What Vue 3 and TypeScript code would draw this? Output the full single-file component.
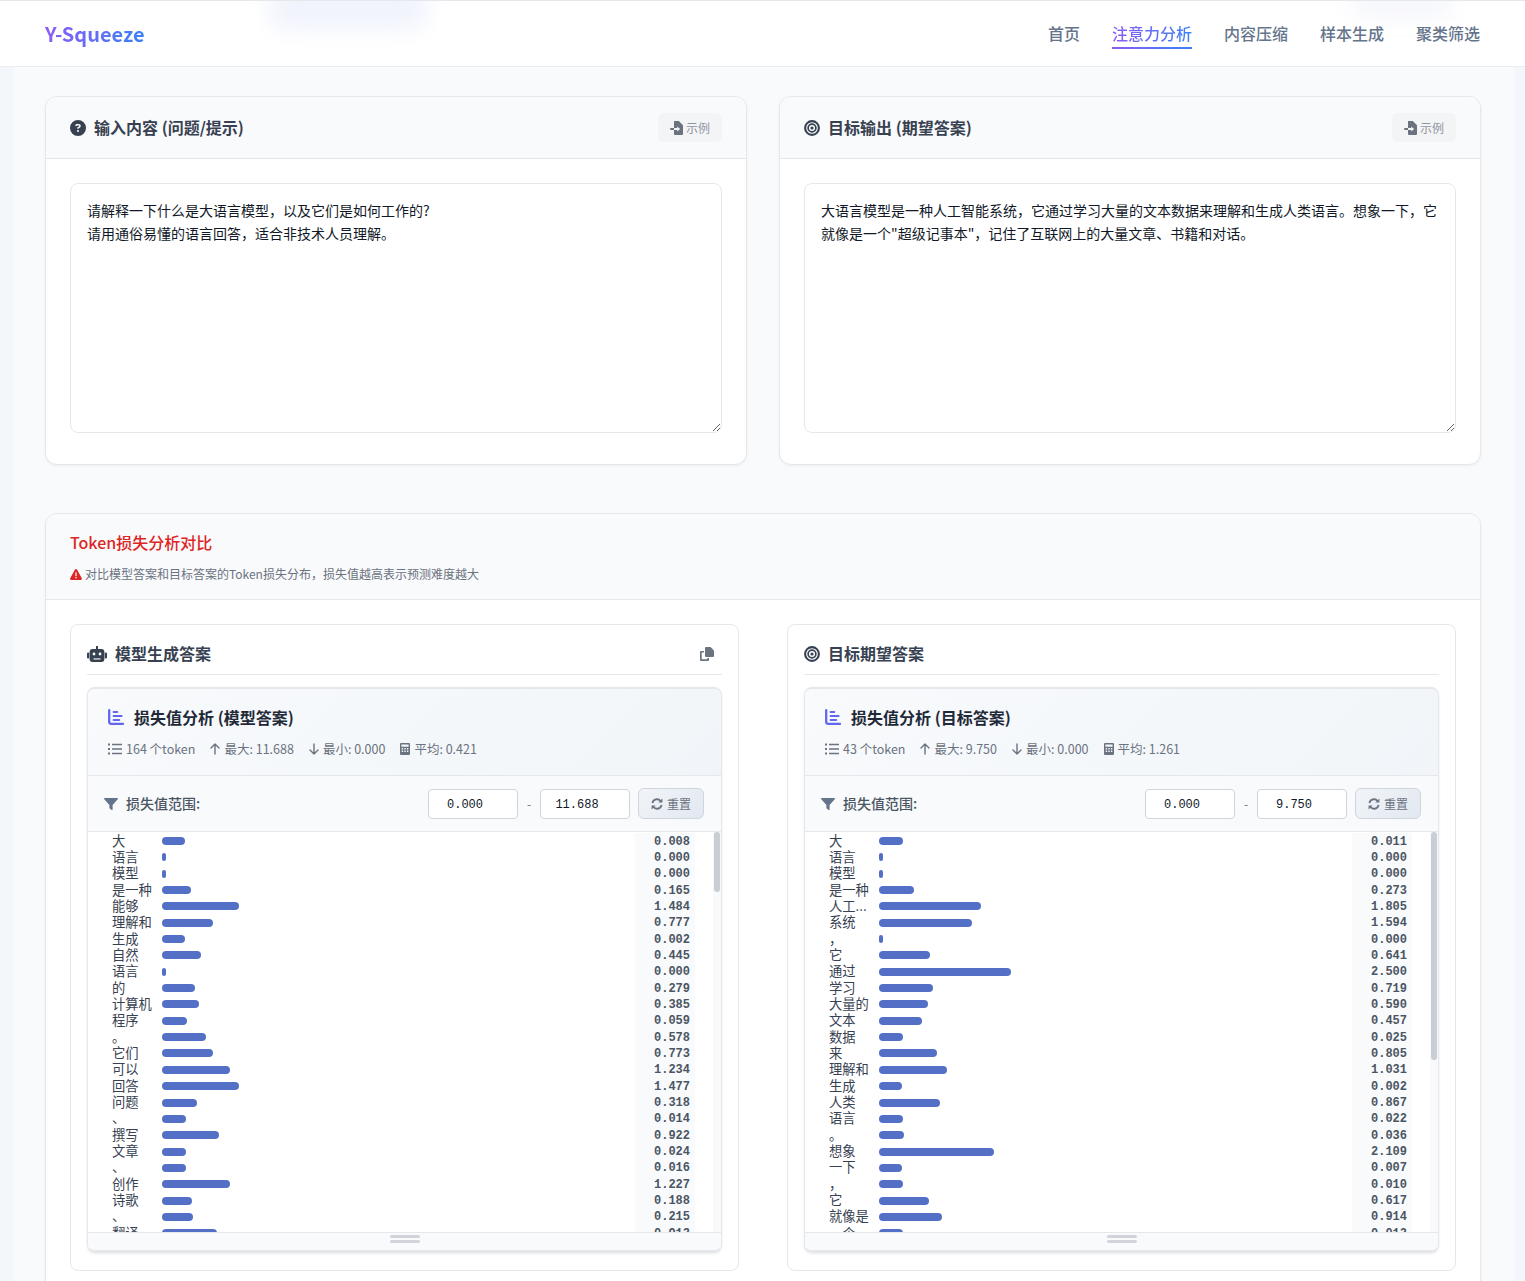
<script setup lang="ts">
interface Row {
  label: string
  bar: number
  value: string
}

interface Panel {
  title: string
  icon: 'robot' | 'target'
  analysis: string
  count: number
  max: string
  min: string
  avg: string
  rows: Row[]
}

const toRows = (items: [string, number, string][]): Row[] =>
  items.map(([label, bar, value]) => ({ label, bar, value }))

const ROW_HEIGHT = 16.35
const LIST_HEIGHT = 400

const thumbHeight = (count: number) => (LIST_HEIGHT / (count * ROW_HEIGHT)) * LIST_HEIGHT

const inputText = '请解释一下什么是大语言模型，以及它们是如何工作的?\n请用通俗易懂的语言回答，适合非技术人员理解。'
const targetText =
  '大语言模型是一种人工智能系统，它通过学习大量的文本数据来理解和生成人类语言。想象一下，它就像是一个"超级记事本"，记住了互联网上的大量文章、书籍和对话。'

const navItems = ['首页', '注意力分析', '内容压缩', '样本生成', '聚类筛选']

const panels: Panel[] = [
  {
    title: '模型生成答案',
    icon: 'robot',
    analysis: '损失值分析 (模型答案)',
    count: 164,
    max: '11.688',
    min: '0.000',
    avg: '0.421',
    rows: toRows([
      ['大', 23, '0.008'], ['语言', 4, '0.000'], ['模型', 4, '0.000'], ['是一种', 29, '0.165'],
      ['能够', 77, '1.484'], ['理解和', 51, '0.777'], ['生成', 23, '0.002'], ['自然', 39, '0.445'],
      ['语言', 4, '0.000'], ['的', 33, '0.279'], ['计算机', 37, '0.385'], ['程序', 25, '0.059'],
      ['。', 44, '0.578'], ['它们', 51, '0.773'], ['可以', 68, '1.234'], ['回答', 77, '1.477'],
      ['问题', 35, '0.318'], ['、', 24, '0.014'], ['撰写', 57, '0.922'], ['文章', 24, '0.024'],
      ['、', 24, '0.016'], ['创作', 68, '1.227'], ['诗歌', 30, '0.188'], ['、', 31, '0.215'],
      ['翻译', 55, '0.913']
    ])
  },
  {
    title: '目标期望答案',
    icon: 'target',
    analysis: '损失值分析 (目标答案)',
    count: 43,
    max: '9.750',
    min: '0.000',
    avg: '1.261',
    rows: toRows([
      ['大', 24, '0.011'], ['语言', 4, '0.000'], ['模型', 4, '0.000'], ['是一种', 35, '0.273'],
      ['人工...', 102, '1.805'], ['系统', 93, '1.594'], ['，', 4, '0.000'], ['它', 51, '0.641'],
      ['通过', 132, '2.500'], ['学习', 54, '0.719'], ['大量的', 49, '0.590'], ['文本', 43, '0.457'],
      ['数据', 24, '0.025'], ['来', 58, '0.805'], ['理解和', 68, '1.031'], ['生成', 23, '0.002'],
      ['人类', 61, '0.867'], ['语言', 24, '0.022'], ['。', 25, '0.036'], ['想象', 115, '2.109'],
      ['一下', 23, '0.007'], ['，', 24, '0.010'], ['它', 50, '0.617'], ['就像是', 63, '0.914'],
      ['一个', 24, '0.012']
    ])
  }
]
</script>

<template>
  <div class="page">
    <header class="topbar">
      <span class="blob blob-a"></span>
      <span class="blob blob-b"></span>
      <div class="logo">Y-Squeeze</div>
      <nav class="nav">
        <a v-for="(item, i) in navItems" :key="item" class="nav-link" :class="{ active: i === 1 }">{{ item }}</a>
      </nav>
    </header>

    <main class="main">
      <section class="io-grid">
        <div class="card">
          <div class="card-head">
            <h2 class="card-title">
              <svg class="ico16" viewBox="0 0 512 512"><path fill="currentColor" d="M256 512A256 256 0 1 0 256 0a256 256 0 1 0 0 512zM169.8 165.3c7.9-22.3 29.1-37.3 52.8-37.3h58.3c34.9 0 63.1 28.3 63.1 63.1c0 22.6-12.1 43.5-31.7 54.8L280 264.4c-.2 13-10.9 23.6-24 23.6c-13.3 0-24-10.7-24-24V250.5c0-8.6 4.6-16.5 12.1-20.8l44.3-25.4c4.7-2.7 7.6-7.7 7.6-13.1c0-8.4-6.8-15.1-15.1-15.1H222.6c-3.4 0-6.4 2.1-7.5 5.3l-.4 1.2c-4.4 12.5-18.2 19-30.6 14.6s-19-18.2-14.6-30.6l.4-1.2zM224 352a32 32 0 1 1 64 0 32 32 0 1 1 -64 0z" /></svg>
              输入内容 (问题/提示)
            </h2>
            <button class="example-btn">
              <svg class="ico-file" viewBox="0 0 14 14"><path fill="currentColor" d="M4 0h4.8L13 4.2V13a1 1 0 0 1-1 1H5a1 1 0 0 1-1-1V9h3.2v1.5L10.2 8 7.2 5.5V7H4V0z" /><path fill="currentColor" d="M1 7h3v2H1a1 1 0 0 1 0-2z" /></svg>
              示例
            </button>
          </div>
          <div class="card-body">
            <textarea class="editor" :value="inputText" spellcheck="false"></textarea>
          </div>
        </div>

        <div class="card">
          <div class="card-head">
            <h2 class="card-title">
              <svg class="ico16" viewBox="0 0 16 16"><circle cx="8" cy="8" r="6.9" fill="none" stroke="currentColor" stroke-width="2.1" /><circle cx="8" cy="8" r="3.9" fill="none" stroke="currentColor" stroke-width="1.7" /><circle cx="8" cy="8" r="1.6" fill="currentColor" /></svg>
              目标输出 (期望答案)
            </h2>
            <button class="example-btn">
              <svg class="ico-file" viewBox="0 0 14 14"><path fill="currentColor" d="M4 0h4.8L13 4.2V13a1 1 0 0 1-1 1H5a1 1 0 0 1-1-1V9h3.2v1.5L10.2 8 7.2 5.5V7H4V0z" /><path fill="currentColor" d="M1 7h3v2H1a1 1 0 0 1 0-2z" /></svg>
              示例
            </button>
          </div>
          <div class="card-body">
            <textarea class="editor" :value="targetText" spellcheck="false"></textarea>
          </div>
        </div>
      </section>

      <section class="card compare">
        <div class="compare-head">
          <h2 class="compare-title">Token损失分析对比</h2>
          <p class="compare-sub">
            <svg class="ico-warn" viewBox="0 0 12 11"><path fill="#dc2626" d="M6 0c.4 0 .8.2 1 .6l4.8 8.6c.4.8-.1 1.8-1 1.8H1.2c-.9 0-1.4-1-1-1.8L5 .6C5.2.2 5.6 0 6 0z" /><rect x="5.4" y="3.2" width="1.2" height="4" rx=".5" fill="#fff" /><circle cx="6" cy="8.8" r=".8" fill="#fff" /></svg>
            对比模型答案和目标答案的Token损失分布，损失值越高表示预测难度越大
          </p>
        </div>

        <div class="compare-grid">
          <div v-for="panel in panels" :key="panel.title" class="panel">
            <div class="panel-head">
              <h3 class="panel-title">
                <svg v-if="panel.icon === 'robot'" class="ico-robot" viewBox="0 0 20 16">
                  <rect x="2.6" y="3" width="14.8" height="13" rx="3" fill="currentColor" />
                  <rect x="9" y="0" width="2" height="4" fill="currentColor" />
                  <rect x="0" y="6.5" width="2.2" height="6" rx="1" fill="currentColor" />
                  <rect x="17.8" y="6.5" width="2.2" height="6" rx="1" fill="currentColor" />
                  <circle cx="7" cy="8" r="1.4" fill="#fff" />
                  <circle cx="13" cy="8" r="1.4" fill="#fff" />
                  <rect x="6.5" y="12.4" width="7" height="1.1" fill="#fff" />
                </svg>
                <svg v-else class="ico16" viewBox="0 0 16 16"><circle cx="8" cy="8" r="6.9" fill="none" stroke="currentColor" stroke-width="2.1" /><circle cx="8" cy="8" r="3.9" fill="none" stroke="currentColor" stroke-width="1.7" /><circle cx="8" cy="8" r="1.6" fill="currentColor" /></svg>
                {{ panel.title }}
              </h3>
              <svg v-if="panel.icon === 'robot'" class="ico-copy" viewBox="0 0 14 14">
                <path fill="currentColor" d="M6 0h4.5L14 3.5V9a1 1 0 0 1-1 1H6a1 1 0 0 1-1-1V1a1 1 0 0 1 1-1z" />
                <path fill="currentColor" d="M1 4h3v1.6H1.7v6.7h5.6V11H9v2a1 1 0 0 1-1 1H1a1 1 0 0 1-1-1V5a1 1 0 0 1 1-1z" />
              </svg>
            </div>

            <div class="loss-box">
              <div class="loss-head">
                <h4 class="loss-title">
                  <svg class="ico-chart" viewBox="0 0 16 16">
                    <path fill="none" stroke="#6366f1" stroke-width="2.3" stroke-linecap="round" d="M1.2 1.2v11.6a2 2 0 0 0 2 2H15" />
                    <path fill="none" stroke="#6366f1" stroke-width="2" stroke-linecap="round" d="M5.6 3h3.6M5.6 7h8M5.6 11h5.6" />
                  </svg>
                  {{ panel.analysis }}
                </h4>
                <div class="loss-stats">
                  <span class="stat">
                    <svg class="ico-stat" viewBox="0 0 14 12"><path fill="currentColor" d="M0 .5h2v2H0zM0 5h2v2H0zM0 9.5h2v2H0zM4 .8h10v1.4H4zM4 5.3h10v1.4H4zM4 9.8h10v1.4H4z" /></svg>
                    {{ panel.count }} 个token
                  </span>
                  <span class="stat">
                    <svg class="ico-arrow" viewBox="0 0 10 12"><path fill="none" stroke="currentColor" stroke-width="1.4" stroke-linecap="round" stroke-linejoin="round" d="M5 11V1M1 5l4-4 4 4" /></svg>
                    最大: {{ panel.max }}
                  </span>
                  <span class="stat">
                    <svg class="ico-arrow" viewBox="0 0 10 12"><path fill="none" stroke="currentColor" stroke-width="1.4" stroke-linecap="round" stroke-linejoin="round" d="M5 1v10M1 7l4 4 4-4" /></svg>
                    最小: {{ panel.min }}
                  </span>
                  <span class="stat">
                    <svg class="ico-calc" viewBox="0 0 10 12"><path fill="currentColor" fill-rule="evenodd" d="M1 0h8a1 1 0 0 1 1 1v10a1 1 0 0 1-1 1H1a1 1 0 0 1-1-1V1a1 1 0 0 1 1-1zm.4 1.4v2.4h7.2V1.4zm.3 3.6v1.4h1.4V5zm2.6 0v1.4h1.4V5zm2.6 0v1.4h1.4V5zM1.7 7.6V9h1.4V7.6zm2.6 0V9h1.4V7.6zm2.6 0V9h1.4V7.6z" /></svg>
                    平均: {{ panel.avg }}
                  </span>
                </div>
              </div>

              <div class="filter">
                <span class="filter-label">
                  <svg class="ico-funnel" viewBox="0 0 14 12"><path fill="currentColor" d="M.6 0h12.8c.5 0 .8.6.5 1L8.6 7v4.4c0 .5-.5.8-.9.5l-2-1.4a.6.6 0 0 1-.3-.5V7L.1 1C-.2.6.1 0 .6 0z" /></svg>
                  损失值范围:
                </span>
                <div class="filter-controls">
                  <input class="range-input" type="text" :value="panel.min" />
                  <span class="dash">-</span>
                  <input class="range-input" type="text" :value="panel.max" />
                  <button class="reset-btn">
                    <svg class="ico-sync" viewBox="0 0 12 12">
                      <path fill="none" stroke="currentColor" stroke-width="1.8" d="M1.4 5A4.7 4.7 0 0 1 9.6 3M10.6 7A4.7 4.7 0 0 1 2.4 9" />
                      <path fill="currentColor" d="M11.4.6v4H7.4zM.6 11.4v-4h4z" />
                    </svg>
                    重置
                  </button>
                </div>
              </div>

              <div class="token-list">
                <div class="token-rows">
                  <div v-for="(row, i) in panel.rows" :key="i" class="token-row">
                    <span class="token-label">{{ row.label }}</span>
                    <span class="token-track"><i class="token-bar" :style="{ width: row.bar + 'px' }"></i></span>
                    <span class="token-value">{{ row.value }}</span>
                  </div>
                </div>
                <div class="scroll-track">
                  <div class="scroll-thumb" :style="{ height: thumbHeight(panel.count) + 'px' }"></div>
                </div>
              </div>

              <div class="resize-bar">
                <span class="grip"></span>
                <span class="grip"></span>
              </div>
            </div>
          </div>
        </div>
      </section>
    </main>
  </div>
</template>

<style scoped>
.page {
  position: relative;
  height: 1281px;
  overflow: hidden;
  color: #374151;
  font-family: "Noto Sans CJK SC", "Noto Sans", sans-serif;
  background: linear-gradient(90deg, #f3f6fb 0, #f3f6fb 13px, #f8fafc 14px, #f8fafc 1514px, #f3f6fb 1515px);
}

.topbar {
  position: relative;
  height: 67px;
  box-sizing: border-box;
  display: flex;
  align-items: center;
  justify-content: space-between;
  padding: 0 45px;
  background: #fff;
  border-top: 1px solid #e5e7eb;
  border-bottom: 1px solid #e9edf3;
  overflow: hidden;
}

.blob {
  position: absolute;
  border-radius: 20px;
  filter: blur(10px);
}

.blob-a {
  left: 268px;
  top: -20px;
  width: 160px;
  height: 50px;
  background: #f2f4fd;
}

.blob-b {
  left: 1350px;
  top: -20px;
  width: 105px;
  height: 40px;
  background: #f7f8fc;
}

.logo {
  position: relative;
  font-size: 20px;
  font-weight: 700;
  background: linear-gradient(90deg, #8b5cf6, #3b82f6);
  -webkit-background-clip: text;
  background-clip: text;
  color: transparent;
}

.nav {
  position: relative;
  display: flex;
  gap: 32px;
  margin-top: -1px;
}

.nav-link {
  position: relative;
  font-size: 16px;
  font-weight: 500;
  line-height: 24px;
  color: #64748b;
}

.nav-link.active {
  background: linear-gradient(90deg, #8b5cf6, #3b82f6);
  -webkit-background-clip: text;
  background-clip: text;
  color: transparent;
}

.nav-link.active::after {
  content: "";
  position: absolute;
  left: 0;
  right: 0;
  bottom: -4px;
  height: 2px;
  background: linear-gradient(90deg, #8b5cf6, #3b82f6);
}

.main {
  padding: 29px 44px 0 45px;
}

.io-grid {
  display: grid;
  grid-template-columns: 1fr 1fr;
  gap: 32px;
  margin-bottom: 48px;
}

.card {
  background: #fff;
  border: 1px solid #e5e7eb;
  border-radius: 12px;
  box-shadow: 0 1px 3px rgba(0, 0, 0, 0.05);
  overflow: hidden;
}

.card-head {
  height: 62px;
  box-sizing: border-box;
  display: flex;
  align-items: center;
  justify-content: space-between;
  padding: 0 24px;
  background: #f9fafb;
  border-bottom: 1px solid #e5e7eb;
}

.card-title,
.panel-title {
  margin: 0;
  padding-bottom: 2px;
  display: flex;
  align-items: center;
  gap: 8px;
  font-size: 16px;
  font-weight: 600;
  color: #374151;
}

.ico16 {
  width: 16px;
  height: 16px;
  margin-top: 2px;
  color: #374151;
}

.example-btn {
  display: flex;
  align-items: center;
  gap: 2px;
  height: 29px;
  width: 64px;
  justify-content: center;
  padding: 0;
  border: none;
  border-radius: 6px;
  background: #f3f4f6;
  color: #8f96a3;
  font: inherit;
  font-size: 12px;
}

.ico-file {
  width: 14px;
  height: 14px;
  color: #6b7280;
}

.card-body {
  padding: 24px 24px 31px;
}

.editor {
  display: block;
  box-sizing: border-box;
  width: 100%;
  height: 250px;
  padding: 15px 16px 16px;
  border: 1px solid #e5e7eb;
  border-radius: 8px;
  outline: none;
  resize: vertical;
  font-family: "Noto Sans CJK SC", "Noto Sans", sans-serif;
  font-size: 14px;
  line-height: 23.1px;
  color: #111827;
}

.compare-head {
  height: 86px;
  box-sizing: border-box;
  padding: 17px 24px 0;
  background: #f9fafb;
  border-bottom: 1px solid #e5e7eb;
}

.compare-title {
  margin: 0;
  font-size: 16px;
  line-height: 22px;
  font-weight: 500;
  color: #dc2626;
}

.compare-sub {
  margin: 12px 0 0;
  display: flex;
  align-items: center;
  gap: 3px;
  font-size: 12px;
  line-height: 18px;
  color: #6b7280;
}

.ico-warn {
  width: 12px;
  height: 11px;
}

.compare-grid {
  display: grid;
  grid-template-columns: 1fr 1fr;
  gap: 48px;
  padding: 24px;
}

.panel {
  border: 1px solid #e5e7eb;
  border-radius: 8px;
  padding: 0 16px 17px;
  background: #fff;
}

.panel-head {
  height: 50px;
  display: flex;
  align-items: center;
  justify-content: space-between;
  border-bottom: 1px solid #e5e7eb;
  margin-bottom: 12px;
  padding-top: 8px;
  box-sizing: border-box;
}

.ico-robot {
  width: 20px;
  height: 16px;
  margin-top: 2px;
  color: #374151;
}

.ico-copy {
  width: 14px;
  height: 14px;
  color: #6b7280;
  margin-right: 8px;
}

.loss-box {
  border: 1px solid #e5e7eb;
  border-top-width: 2px;
  border-bottom-width: 3px;
  border-radius: 8px;
  overflow: hidden;
  box-shadow: 0 1px 3px rgba(0, 0, 0, 0.08);
}

.loss-head {
  height: 87px;
  box-sizing: border-box;
  padding: 17px 20px 0;
  background: linear-gradient(135deg, #f8fafc, #f1f5f9);
  border-bottom: 1px solid #e5e7eb;
}

.loss-title {
  margin: 0;
  display: flex;
  align-items: center;
  gap: 10px;
  font-size: 16px;
  line-height: 22px;
  font-weight: 600;
  color: #1f2937;
}

.ico-chart {
  width: 16px;
  height: 16px;
}

.loss-stats {
  display: flex;
  gap: 15px;
  margin-top: 12px;
  font-size: 12.5px;
  line-height: 18px;
  color: #6b7280;
}

.stat {
  display: flex;
  align-items: center;
  gap: 4px;
}

.ico-stat {
  width: 14px;
  height: 12px;
}

.ico-arrow {
  width: 10px;
  height: 12px;
}

.ico-calc {
  width: 10px;
  height: 12px;
}

.filter {
  height: 56px;
  box-sizing: border-box;
  display: flex;
  align-items: center;
  justify-content: space-between;
  padding: 0 17px 0 16px;
  background: #f8fafc;
  border-bottom: 1px solid #e5e7eb;
}

.filter-label {
  display: flex;
  align-items: center;
  gap: 8px;
  padding-bottom: 2px;
  font-size: 14px;
  font-weight: 500;
  color: #4b5563;
}

.ico-funnel {
  width: 14px;
  height: 12px;
  margin-top: 2px;
  color: #64748b;
}

.filter-controls {
  display: flex;
  align-items: center;
}

.range-input {
  box-sizing: border-box;
  width: 90px;
  height: 30px;
  padding: 2px 16px 0 0;
  border: 1px solid #d1d5db;
  border-radius: 4px;
  outline: none;
  background: #fff;
  text-align: center;
  font-family: "Liberation Mono", monospace;
  font-size: 12px;
  color: #111827;
}

.dash {
  width: 22px;
  text-align: center;
  font-size: 12px;
  color: #6b7280;
}

.reset-btn {
  display: flex;
  align-items: center;
  justify-content: center;
  gap: 4px;
  width: 66px;
  height: 31px;
  margin-left: 8px;
  padding: 0;
  border: 1px solid #d1d5db;
  border-radius: 6px;
  background: linear-gradient(135deg, #f1f5f9, #e2e8f0);
  color: #6b7280;
  font: inherit;
  font-size: 12px;
}

.ico-sync {
  width: 12px;
  height: 12px;
}

.token-list {
  position: relative;
  height: 400px;
  overflow: hidden;
  background: #fff;
}

.token-rows {
  padding-top: 0.5px;
}

.token-row {
  display: grid;
  grid-template-columns: 50px 473px 60px;
  height: 16.35px;
  align-items: center;
  padding-left: 24px;
}

.token-label {
  margin-top: -1px;
  font-size: 13.3px;
  line-height: 16px;
  white-space: nowrap;
  color: #374151;
}

.token-track {
  display: flex;
  align-items: center;
}

.token-bar {
  display: block;
  height: 8px;
  border-radius: 4px;
  background: #5470c6;
}

.token-value {
  height: 100%;
  box-sizing: border-box;
  padding: 1px 5px 0 0;
  background: #f8fafc;
  text-align: right;
  font-family: "Liberation Mono", monospace;
  font-size: 12px;
  font-weight: 700;
  line-height: 16px;
  color: #4b5563;
}

.scroll-track {
  position: absolute;
  top: 0;
  right: 0;
  width: 8px;
  height: 100%;
  background: #f8f9fb;
}

.scroll-thumb {
  width: 6px;
  margin-left: 1px;
  border-radius: 3px;
  background: #c9cdd4;
}

.resize-bar {
  height: 18px;
  box-sizing: border-box;
  display: flex;
  flex-direction: column;
  align-items: center;
  gap: 2px;
  padding-top: 2px;
  background: #f8fafc;
  border-top: 1px solid #e5e7eb;
}

.grip {
  width: 30px;
  height: 3px;
  border-radius: 2px;
  background: #d1d5db;
}
</style>

<style>
html,
body {
  margin: 0;
  background: #f8fafc;
}
</style>
